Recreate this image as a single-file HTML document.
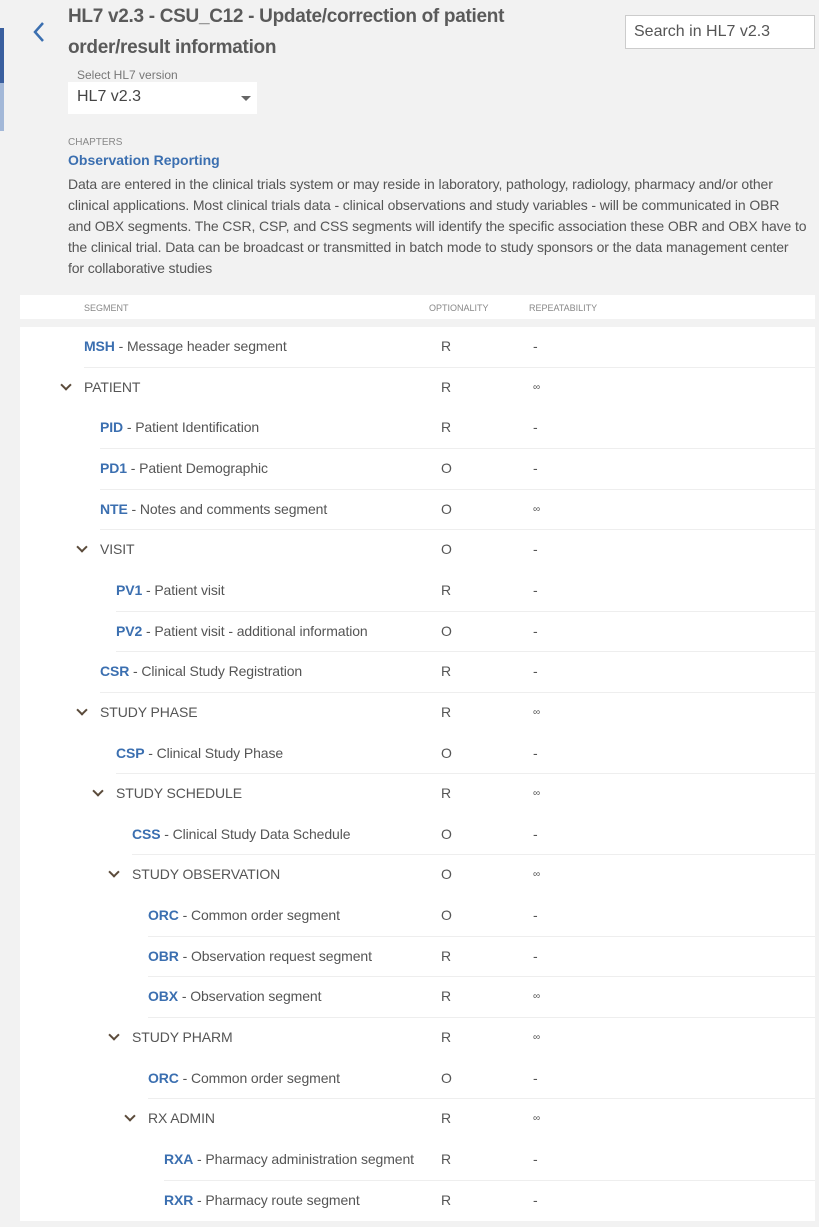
<!DOCTYPE html>
<html><head><meta charset="utf-8"><style>
*{box-sizing:border-box;margin:0;padding:0}
body{width:819px;height:1227px;background:#f2f2f2;font-family:"Liberation Sans",Arial,sans-serif;color:#555;position:relative;overflow:hidden}
.abs{position:absolute}
.title{left:68px;top:1px;font-size:19px;font-weight:bold;line-height:31px;color:#5a5a5a;width:520px;letter-spacing:-0.3px}
.search{left:625px;top:15px;width:190px;height:34px;background:#fff;border:1px solid #ccc;font-size:16px;color:#555;padding:7px 8px}
.lbl{left:77px;top:68px;font-size:12px;color:#777}
.sel{left:68px;top:82px;width:189px;height:32px;background:#fff;font-size:16px;padding:6px 9px;color:#444}
.sel:after{content:"";position:absolute;right:6px;top:14px;border-left:5px solid transparent;border-right:5px solid transparent;border-top:5px solid #666}
.chap{left:68px;top:137px;font-size:10px;color:#888}
.obs{left:68px;top:152px;font-size:14px;color:#3b6fb0;font-weight:bold}
.para{left:68px;top:174px;width:751px;font-size:14px;line-height:21px;color:#555;letter-spacing:-0.12px;white-space:nowrap}
.hdr{left:20px;top:295px;width:795px;height:24px;background:#fff;font-size:9px;color:#888}
.hdr span{position:absolute;top:8px}
.tbl{left:20px;top:327px;width:795px;height:894px;background:#fff}
.row{position:absolute;left:0;width:795px;height:40.7px;font-size:14px;line-height:39px;letter-spacing:-0.1px}
.row .t{position:absolute;top:0}
.row .o{position:absolute;left:421px}
.row .r{position:absolute;left:513px}
.row .ln{position:absolute;bottom:0;right:0;height:1px;background:#eee}
.code{color:#3b6fb0;font-weight:bold}
.chev{position:absolute;top:13px;width:8px;height:8px;border-right:2px solid #5b4b3b;border-bottom:2px solid #5b4b3b;transform:rotate(45deg)}
</style></head><body>
<div class="abs" style="left:0;top:28px;width:4px;height:55px;background:#3a5f9f"></div>
<div class="abs" style="left:0;top:83px;width:4px;height:48px;background:#a3b8d8"></div>
<svg class="abs" style="left:30px;top:20px" width="18" height="24" viewBox="0 0 18 24"><path d="M13 3 L5 12 L13 21" fill="none" stroke="#3b6fb0" stroke-width="2.5"/></svg>
<div class="abs title">HL7 v2.3 - CSU_C12 - Update/correction of patient order/result information</div>
<div class="abs search">Search in HL7 v2.3</div>
<div class="abs lbl">Select HL7 version</div>
<div class="abs sel">HL7 v2.3</div>
<div class="abs chap">CHAPTERS</div>
<div class="abs obs">Observation Reporting</div>
<div class="abs para">Data are entered in the clinical trials system or may reside in laboratory, pathology, radiology, pharmacy and/or other<br>clinical applications. Most clinical trials data - clinical observations and study variables - will be communicated in OBR<br>and OBX segments. The CSR, CSP, and CSS segments will identify the specific association these OBR and OBX have to<br>the clinical trial. Data can be broadcast or transmitted in batch mode to study sponsors or the data management center<br>for collaborative studies</div>
<div class="abs hdr"><span style="left:64px">SEGMENT</span><span style="left:409px">OPTIONALITY</span><span style="left:509px">REPEATABILITY</span></div>
<div class="abs tbl" id="t">
<script>
var rows=[
[0,'s','MSH','Message header segment','R','-'],
[0,'g','PATIENT','','R','∞'],
[1,'s','PID','Patient Identification','R','-'],
[1,'s','PD1','Patient Demographic','O','-'],
[1,'s','NTE','Notes and comments segment','O','∞'],
[1,'g','VISIT','','O','-'],
[2,'s','PV1','Patient visit','R','-'],
[2,'s','PV2','Patient visit - additional information','O','-'],
[1,'s','CSR','Clinical Study Registration','R','-'],
[1,'g','STUDY PHASE','','R','∞'],
[2,'s','CSP','Clinical Study Phase','O','-'],
[2,'g','STUDY SCHEDULE','','R','∞'],
[3,'s','CSS','Clinical Study Data Schedule','O','-'],
[3,'g','STUDY OBSERVATION','','O','∞'],
[4,'s','ORC','Common order segment','O','-'],
[4,'s','OBR','Observation request segment','R','-'],
[4,'s','OBX','Observation segment','R','∞'],
[3,'g','STUDY PHARM','','R','∞'],
[4,'s','ORC','Common order segment','O','-'],
[4,'g','RX ADMIN','','R','∞'],
[5,'s','RXA','Pharmacy administration segment','R','-'],
[5,'s','RXR','Pharmacy route segment','R','-']];
var h='';
rows.forEach(function(r,i){
 var x=64+r[0]*16, top=(i*40.65).toFixed(1);
 var rf=r[5]=='∞'?'<span class="r" style="font-size:10px">∞</span>':'<span class="r">-</span>';
 h+='<div class="row" style="top:'+top+'px">';
 if(r[1]=='s'){h+='<span class="t" style="left:'+x+'px"><span class="code">'+r[2]+'</span> - '+r[3]+'</span>';
  if(i<rows.length-1)h+='<div class="ln" style="left:'+x+'px"></div>';}
 else{h+='<span class="chev" style="left:'+(x-22)+'px"></span><span class="t" style="left:'+x+'px">'+r[2]+'</span>';}
 h+='<span class="o">'+r[4]+'</span>'+rf+'</div>';
});
document.write(h);
</script>
</div>
</body></html>
